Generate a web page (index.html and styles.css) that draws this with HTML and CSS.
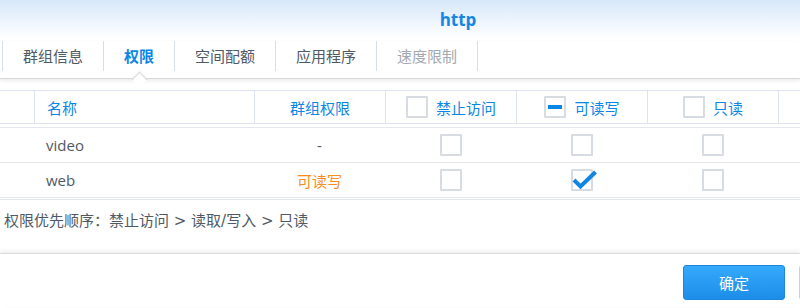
FILE: index.html
```html
<!DOCTYPE html>
<html lang="zh">
<head>
<meta charset="utf-8">
<title>http</title>
<link rel="stylesheet" href="styles.css">
</head>
<body>
<div class="window">
  <header class="titlebar"><span class="title">http</span></header>
  <nav class="tabbar">
    <div class="tab">群组信息</div>
    <div class="tab active">权限</div>
    <div class="tab">空间配额</div>
    <div class="tab">应用程序</div>
    <div class="tab disabled">速度限制</div>
  </nav>
  <div class="table">
    <div class="thead row">
      <div class="cell"></div>
      <div class="cell left">名称</div>
      <div class="cell center">群组权限</div>
      <div class="cell center"><span class="box"></span><span>禁止访问</span></div>
      <div class="cell center"><span class="box partial"><span class="bar"></span></span><span>可读写</span></div>
      <div class="cell center"><span class="box"></span><span>只读</span></div>
      <div class="cell"></div>
    </div>
    <div class="tbody">
      <div class="row">
        <div class="cell"></div>
        <div class="cell left">video</div>
        <div class="cell center">-</div>
        <div class="cell center"><span class="box"></span></div>
        <div class="cell center"><span class="box"></span></div>
        <div class="cell center"><span class="box"></span></div>
        <div class="cell"></div>
      </div>
      <div class="row">
        <div class="cell"></div>
        <div class="cell left">web</div>
        <div class="cell center rw">可读写</div>
        <div class="cell center"><span class="box"></span></div>
        <div class="cell center"><span class="box checked"><svg class="tick" width="26" height="22" viewBox="0 0 26 22"><path d="M2 12 L8.5 18.5 L23.5 4" fill="none" stroke="#0f86e2" stroke-width="4" stroke-linejoin="miter"/></svg></span></div>
        <div class="cell center"><span class="box"></span></div>
        <div class="cell"></div>
      </div>
    </div>
  </div>
  <p class="note">权限优先顺序：禁止访问 &gt; 读取/写入 &gt; 只读</p>
  <footer class="actions">
    <button class="btn primary">确定</button>
    <span class="btn-stub" aria-hidden="true"></span>
  </footer>
</div>
</body>
</html>
```
FILE: styles.css
```css
html, body {
  margin: 0;
  padding: 0;
  background: #ffffff;
  overflow: hidden;
}
body {
  width: 800px;
  height: 308px;
  font-family: "Open Sans", "Noto Sans CJK SC", sans-serif;
  font-size: 15px;
  color: #505a64;
}
.window {
  width: 800px;
}
.titlebar {
  height: 41px;
  background: linear-gradient(#d7e8f9 0px, #eef5fd 22px, #ffffff 38px);
  display: flex;
  align-items: center;
  justify-content: center;
  padding-left: 116px;
  box-sizing: border-box;
}
.title {
  font-family: "Open Sans", sans-serif;
  font-weight: 700;
  font-size: 17px;
  color: #1586e4;
  line-height: 20px;
  margin-top: -2px;
}
.tabbar {
  height: 38px;
  box-sizing: border-box;
  display: flex;
  align-items: flex-start;
  padding-left: 2px;
  border-bottom: 1px solid #d9d9d9;
  box-shadow: 0 2px 4px rgba(0, 0, 0, 0.08);
  position: relative;
}
.tab {
  position: relative;
  height: 30px;
  line-height: 30px;
  padding: 0 20px;
  border-right: 1px solid #d6dee7;
  white-space: nowrap;
  color: #505a64;
}
.tab:first-child {
  border-left: 1px solid #d6dee7;
}
.tab.active {
  color: #0a86e5;
  font-weight: 700;
}
.tab.active::after {
  content: "";
  position: absolute;
  width: 10px;
  height: 10px;
  left: calc(50% - 5.5px);
  top: 32.5px;
  background: #ffffff;
  border-top: 1px solid #d9d9d9;
  border-left: 1px solid #d9d9d9;
  transform: rotate(45deg);
  box-shadow: -1px -1px 2px rgba(0, 0, 0, 0.05);
}
.tab.disabled {
  color: #a3a9b0;
}
.table {
  margin-top: 11px;
}
.row {
  display: grid;
  grid-template-columns: 34px 220px 131px 131px 131px 131px 22px;
  box-sizing: border-box;
}
.cell {
  display: flex;
  align-items: center;
  white-space: nowrap;
}
.cell.left {
  padding-left: 12px;
}
.cell.center {
  justify-content: center;
}
.thead {
  height: 34px;
  border-top: 1px solid #dbe4ee;
  border-bottom: 1px solid #dbe4ee;
  color: #0a86e5;
}
.thead .cell + .cell {
  border-left: 1px solid #dbe4ee;
}
.thead .cell .box {
  margin-right: 8px;
}
.tbody {
  margin-top: 3px;
  border-top: 1px solid #e3e7ec;
  border-bottom: 1px solid #e3e7ec;
  padding-bottom: 1px;
}
.tbody .row {
  height: 35px;
  border-bottom: 1px solid #e3e7ec;
}
.rw {
  color: #f98d1f;
}
.box {
  position: relative;
  display: inline-block;
  width: 22px;
  height: 22px;
  box-sizing: border-box;
  border: 2px solid #d7dce3;
  border-radius: 1px;
  background: #ffffff;
  flex: none;
}
.box .bar {
  position: absolute;
  left: 2px;
  top: 7px;
  width: 14px;
  height: 4px;
  background: #0a86e5;
}
.tick {
  position: absolute;
  left: -1px;
  top: -3px;
  overflow: visible;
}
.note {
  margin: 11px 0 0 4px;
  line-height: 20px;
  color: #4f5a65;
  font-family: "DejaVu Sans", "Noto Sans CJK SC", sans-serif;
}
.actions {
  margin-top: 22px;
  border-top: 1px solid #dcdcdc;
  box-shadow: 0 -2px 4px rgba(0, 0, 0, 0.07);
  padding-top: 11px;
  display: flex;
  justify-content: flex-end;
  height: 54px;
  box-sizing: border-box;
}
.btn {
  width: 102px;
  height: 35px;
  box-sizing: border-box;
  border-radius: 3px;
  font-family: "Noto Sans CJK SC", sans-serif;
  font-size: 15px;
  cursor: pointer;
  padding: 0;
}
.btn.primary {
  color: #ffffff;
  background: linear-gradient(#35aafc, #1c8de8);
  border: 1px solid #1a86dc;
  margin-right: 14px;
}
.btn-stub {
  width: 102px;
  height: 35px;
  box-sizing: border-box;
  border: 1px solid #c9d0d8;
  border-radius: 3px;
  background: linear-gradient(#ffffff, #f1f3f5);
  margin-right: -101px;
  flex: none;
}
```
